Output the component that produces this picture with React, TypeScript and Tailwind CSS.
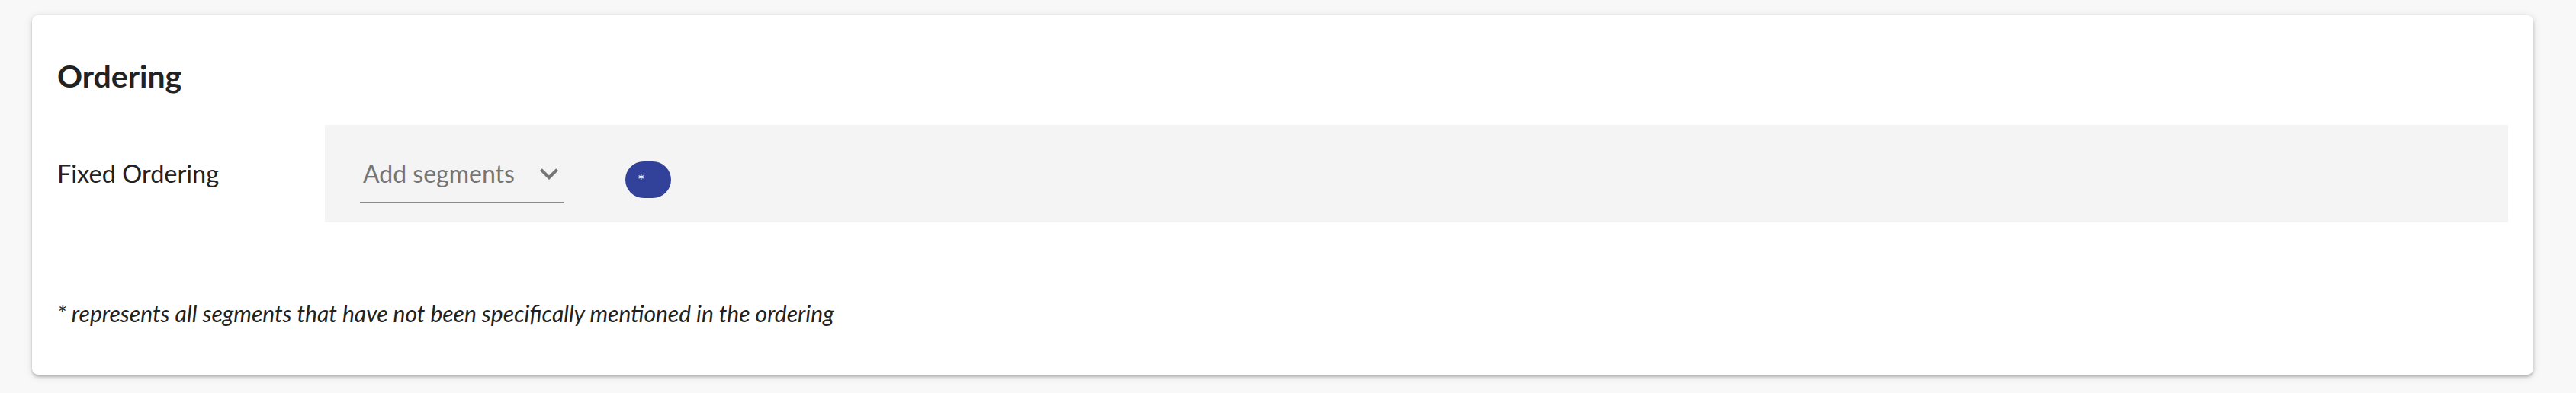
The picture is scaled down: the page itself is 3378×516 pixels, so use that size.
export default function App() {
  return (
    <div className="min-h-[516px] bg-[#f8f8f8] pt-[20px] pb-[24px] pl-[42px] pr-[56px] font-['Lato','Liberation_Sans',sans-serif]">
      <div className="rounded-[8px] bg-white pt-[56px] pb-[58px] px-[33px] shadow-[0_4px_4px_-2px_rgba(0,0,0,0.2),0_2px_4px_0_rgba(0,0,0,0.14),0_2px_12px_0_rgba(0,0,0,0.12)]">
        <h2 className="text-[41px] leading-[48px] font-bold text-[#222222]">Ordering</h2>

        <div className="mt-[40px] flex items-center">
          <div className="w-[351px] shrink-0 text-[32.5px] text-[#222222]">Fixed Ordering</div>
          <div className="flex h-[128px] flex-1 items-center bg-[#f4f4f4] pl-[46px]">
            <div className="flex w-[268px] items-center justify-between border-b-2 border-[#8a8a8a] pt-[14px] pb-[13px] pl-[4px]">
              <span className="text-[32px] text-[#757575]">Add segments</span>
              <svg viewBox="0 0 24 24" className="-my-[6px] -mr-[4px] h-[48px] w-[48px] fill-[#757575]">
                <path d="M16.59 8.59 12 13.17 7.41 8.59 6 10l6 6 6-6z" />
              </svg>
            </div>
            <div className="mt-[16px] ml-[80px] flex h-[48px] w-[60px] items-center rounded-full bg-[#32429a] pl-[16px] text-[22px] text-white">
              *
            </div>
          </div>
        </div>

        <p className="mt-[97px] text-[30px] leading-[45px] italic text-[#222222]">
          * represents all segments that have not been specifically mentioned in the ordering
        </p>
      </div>
    </div>
  );
}
